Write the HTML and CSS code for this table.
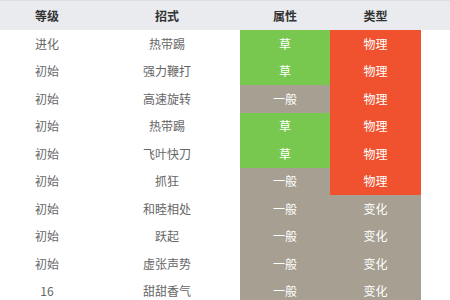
FILE: index.html
```html
<!DOCTYPE html>
<html lang="zh-CN">
<head>
<meta charset="utf-8">
<title>招式表</title>
<link rel="stylesheet" href="styles.css">
</head>
<body>
<table class="moves">
  <colgroup>
    <col class="c-level"><col class="c-name"><col class="c-attr"><col class="c-kind"><col class="c-rest">
  </colgroup>
  <thead>
    <tr><th>等级</th><th>招式</th><th>属性</th><th>类型</th><th></th></tr>
  </thead>
  <tbody>
    <tr><td>进化</td><td>热带踢</td><td class="grass">草</td><td class="phys">物理</td><td></td></tr>
    <tr><td>初始</td><td>强力鞭打</td><td class="grass">草</td><td class="phys">物理</td><td></td></tr>
    <tr><td>初始</td><td>高速旋转</td><td class="normal">一般</td><td class="phys">物理</td><td></td></tr>
    <tr><td>初始</td><td>热带踢</td><td class="grass">草</td><td class="phys">物理</td><td></td></tr>
    <tr><td>初始</td><td>飞叶快刀</td><td class="grass">草</td><td class="phys">物理</td><td></td></tr>
    <tr><td>初始</td><td>抓狂</td><td class="normal">一般</td><td class="phys">物理</td><td></td></tr>
    <tr><td>初始</td><td>和睦相处</td><td class="normal">一般</td><td class="status">变化</td><td></td></tr>
    <tr><td>初始</td><td>跃起</td><td class="normal">一般</td><td class="status">变化</td><td></td></tr>
    <tr><td>初始</td><td>虚张声势</td><td class="normal">一般</td><td class="status">变化</td><td></td></tr>
    <tr><td>16</td><td>甜甜香气</td><td class="normal">一般</td><td class="status">变化</td><td></td></tr>
  </tbody>
</table>
</body>
</html>
```
FILE: styles.css
```css
html, body {
  margin: 0;
  padding: 0;
  background: #fff;
  overflow: hidden;
}

.moves {
  border-collapse: collapse;
  table-layout: fixed;
  width: 470px;
  font-family: "Noto Sans CJK SC", "Liberation Sans", sans-serif;
  font-size: 12px;
  color: #666;
}

.c-level { width: 94px; }
.c-name { width: 146px; }
.c-attr { width: 90px; }
.c-kind { width: 91px; }
.c-rest { width: 49px; }

.moves th {
  height: 29px;
  padding: 0;
  background: #e9ebef;
  border-top: 1px solid #dcdfe4;
  color: #333;
  font-weight: bold;
  font-size: 12px;
  text-align: center;
}

.moves td {
  height: 27.5px;
  padding: 0;
  text-align: center;
  line-height: 1;
}

.moves td.grass { background: #78c850; color: #fff; }
.moves td.phys { background: #f0522f; color: #fff; }
.moves td.normal,
.moves td.status { background: #a69f92; color: #fff; }
```
